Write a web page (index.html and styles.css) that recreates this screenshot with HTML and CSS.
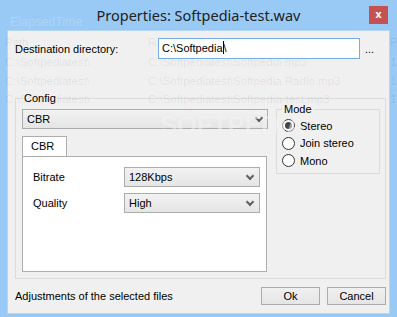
FILE: index.html
```html
<!DOCTYPE html>
<html lang="en">
  <head>
    <meta charset="UTF-8" />
    <title>Properties: Softpedia-test.wav</title>
    <link rel="stylesheet" href="styles.css">
  </head>
  <body>
    <div class="window">
      <!-- list of the main window, seen through the dialog -->
      <div class="ghost">
        <span class="g-title">ElapsedTime</span><span></span><span></span>
        <span>Path</span><span>Rating</span><span>P</span>
        <span>C:\Softpediatest\</span><span>C:\Softpediatest\Softpedia.mp3</span><span>1(</span>
        <span>C:\Softpediatest\</span><span>C:\Softpediatest\Softpedia Radio.mp3</span><span>1(</span>
        <span>C:\Softpediatest\</span><span>C:\Softpediatest\Softpedia-test.mp3</span><span>1(</span>
      </div>

      <div class="titlebar">
        <span></span>
        <h1>Properties: Softpedia-test.wav</h1>
        <button class="close">x</button>
      </div>

      <div class="client">
        <div class="dest-row">
          <label for="dest">Destination directory:</label>
          <div class="textbox">C:\Softpedia<span class="caret"></span>\</div>
          <span class="browse">...</span>
        </div>

        <fieldset class="config">
          <legend>Config</legend>
          <div class="config-left">
            <div class="combo wide">CBR</div>
            <div class="tabs">
              <div class="tab active">CBR</div>
            </div>
            <div class="tab-panel">
              <span>Bitrate</span>
              <div class="combo">128Kbps</div>
              <span>Quality</span>
              <div class="combo">High</div>
            </div>
          </div>

          <fieldset class="mode">
            <legend>Mode</legend>
            <div class="radio checked"><i></i>Stereo</div>
            <div class="radio"><i></i>Join stereo</div>
            <div class="radio"><i></i>Mono</div>
          </fieldset>
        </fieldset>

        <div class="status-row">
          <span>Adjustments of the selected files</span>
          <div class="buttons">
            <button>Ok</button>
            <button>Cancel</button>
          </div>
        </div>
      </div>

      <div class="watermark">SOFTPEDIA<sup>®</sup></div>
    </div>
  </body>
</html>
```

FILE: styles.css
```css
* {
  margin: 0;
  padding: 0;
  box-sizing: border-box;
}

body {
  background: #99c9f5;
  font-family: "Liberation Sans", Arial, sans-serif;
  font-size: 11px;
  color: #000;
}

.window {
  position: relative;
  width: 397px;
  height: 317px;
  overflow: hidden;
  display: flex;
  flex-direction: column;
}

/* faint list behind the dialog */
.ghost {
  position: absolute;
  top: 12px;
  left: 5px;
  display: grid;
  grid-template-columns: 143px 242px 7px;
  grid-template-rows: 20px 20px 20px 18px 17px;
  align-items: center;
  font-size: 11.5px;
  color: rgba(0, 0, 0, 0.08);
  white-space: nowrap;
  overflow: hidden;
  pointer-events: none;
}

.ghost .g-title {
  padding-left: 5px;
  font-size: 12.5px;
  color: rgba(255, 255, 255, 0.22);
}

.titlebar {
  height: 30px;
  display: grid;
  grid-template-columns: 1fr auto 1fr;
  align-items: center;
}

.titlebar h1 {
  font-family: "Noto Sans", "Open Sans", sans-serif;
  font-size: 14.5px;
  font-weight: 400;
  color: #222;
  margin-top: -1px;
}

.close {
  justify-self: end;
  align-self: start;
  margin: 6px 9px 0 0;
  width: 19px;
  height: 18px;
  border: none;
  background: #c75050;
  color: #fff;
  font-family: "DejaVu Sans", sans-serif;
  font-size: 10px;
  font-weight: 700;
  line-height: 16px;
}

.client {
  flex: 1;
  margin: 0 7px 3px;
  border: 1px solid #b6d6f3;
  background: #f0f0f0;
  display: flex;
  flex-direction: column;
}

.dest-row {
  display: flex;
  align-items: center;
  height: 21px;
  margin: 7px 0 0 7px;
}

.dest-row label {
  width: 143px;
}

.textbox {
  position: relative;
  width: 202px;
  height: 21px;
  border: 1px solid #74ade6;
  background: #fff;
  padding: 0 3px;
  line-height: 19px;
}

.caret {
  display: inline-block;
  width: 1px;
  height: 13px;
  background: #000;
  vertical-align: -2px;
}

.browse {
  margin-left: 5px;
}

fieldset {
  border: 1px solid #dcdcdc;
}

legend {
  padding: 0 2px;
  line-height: 13px;
}

.config {
  display: flex;
  gap: 8px;
  width: 371px;
  height: 187px;
  margin: 33px 0 0 7px;
  padding: 4px 4px 0 6px;
}

.config-left {
  width: 246px;
}

.combo {
  position: relative;
  height: 20px;
  border: 1px solid #acacac;
  background: linear-gradient(#f2f2f2, #e5e5e5);
  padding-left: 4px;
  line-height: 18px;
}

.combo::after {
  content: "";
  position: absolute;
  right: 6px;
  top: 5px;
  width: 4px;
  height: 4px;
  border-right: 2px solid #606060;
  border-bottom: 2px solid #606060;
  transform: rotate(45deg);
}

.combo.wide::after {
  right: 5px;
}

.tabs {
  display: flex;
  margin-top: 7px;
}

.tab {
  position: relative;
  width: 45px;
  height: 21px;
  margin-bottom: -1px;
  border: 1px solid #adadad;
  border-bottom: none;
  background: #fff;
  padding-left: 8px;
  line-height: 19px;
}

.tab-panel {
  position: relative;
  display: grid;
  grid-template-columns: 91px 136px;
  grid-auto-rows: 20px;
  row-gap: 6px;
  align-items: center;
  width: 245px;
  height: 116px;
  border: 1px solid #adadad;
  background: #fff;
  padding: 10px 0 0 10px;
}

.mode {
  position: relative;
  align-self: flex-start;
  width: 104px;
  margin-top: -6px;
  padding: 1px 0 3px 5px;
}

.radio {
  display: flex;
  align-items: center;
  gap: 5px;
  height: 17.5px;
}

.radio i {
  width: 13px;
  height: 13px;
  border: 1px solid #333;
  border-radius: 50%;
  background: #fff;
  display: flex;
  align-items: center;
  justify-content: center;
}

.radio.checked i::after {
  content: "";
  width: 7px;
  height: 7px;
  border-radius: 50%;
  background: #444;
}

.status-row {
  display: flex;
  align-items: center;
  height: 18px;
  margin: 8px 3px 0 7px;
}

.buttons {
  margin-left: auto;
  display: flex;
  gap: 7px;
}

.buttons button {
  position: relative;
  width: 59px;
  height: 18px;
  border: 1px solid #acacac;
  background: linear-gradient(#f0f0f0, #e5e5e5);
  font-family: "Liberation Sans", Arial, sans-serif;
  font-size: 11px;
  color: #000;
}

/* site watermark laid over the shot */
.watermark {
  position: absolute;
  top: 102px;
  left: 160px;
  font-size: 26px;
  font-weight: 700;
  letter-spacing: -0.5px;
  line-height: 30px;
  color: rgba(255, 255, 255, 0.5);
  text-shadow: 0 0 1px rgba(0, 0, 0, 0.05);
  pointer-events: none;
}

.watermark sup {
  font-size: 8px;
  vertical-align: 15px;
}
```
